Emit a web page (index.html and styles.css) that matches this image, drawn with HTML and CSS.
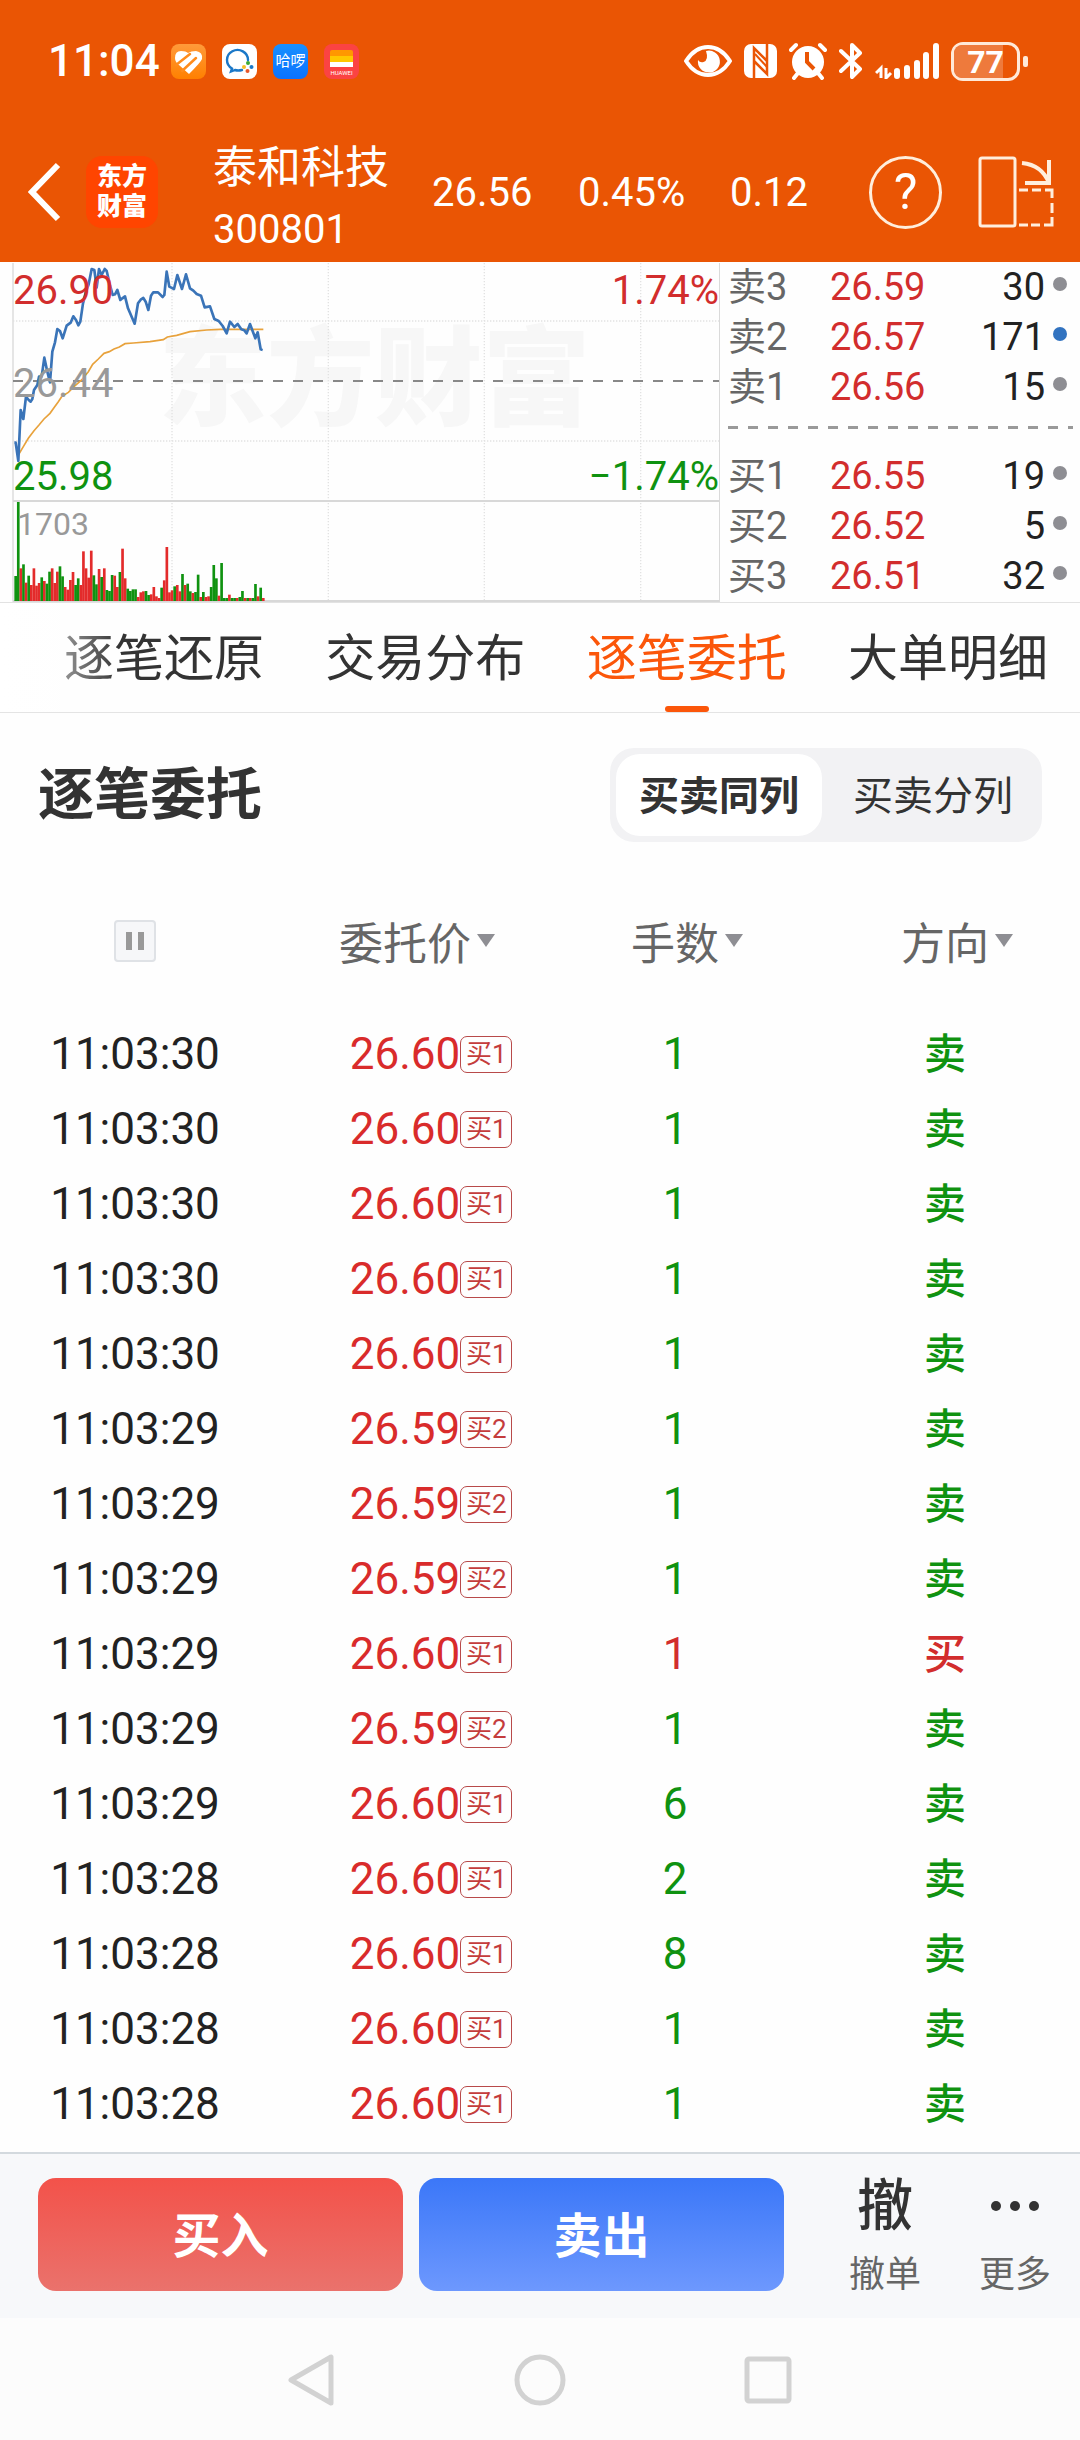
FILE: index.html
```html
<!DOCTYPE html>
<html lang="zh-CN">
<head>
<meta charset="utf-8">
<meta name="viewport" content="width=device-width, initial-scale=1">
<title>泰和科技 300801</title>
<link rel="stylesheet" href="styles.css">
</head>
<body>
<header class="top">
  <div class="status">
    <span class="clock">11:04</span>
    <div class="notices">
      <svg class="app" viewBox="0 0 35 35"><defs><linearGradient id="amber" x1="0" y1="0" x2="0" y2="1"><stop offset="0" stop-color="#ff9a3a"/><stop offset="1" stop-color="#ff8000"/></linearGradient></defs><rect width="35" height="35" rx="8" fill="url(#amber)"/><path d="M4 14Q4 7 10 7Q15 7 17 9Q20 7 25 7Q32 8 31 15Q30 18 18 30L8 21Q4 18 4 14Z" fill="#fff"/><path d="M5 21 19 10M11 27 25 14" fill="none" stroke="#ff8c1c" stroke-width="2.500" stroke-linecap="round"/></svg>
      <svg class="app" viewBox="0 0 35 35"><rect width="35" height="35" rx="8" fill="#fff"/><path d="M26 16A10.500 10 0 1 0 10 24.500L9 27.500 13 26Q16 27 20 26" fill="none" stroke="#1b78c8" stroke-width="2.400" stroke-linecap="round"/><circle cx="26" cy="19" r="2" fill="#3ba935"/><circle cx="29.500" cy="23" r="2" fill="#1b78c8"/><circle cx="25.500" cy="27" r="2" fill="#e8572a"/><circle cx="22" cy="23" r="2" fill="#f6bf26"/></svg>
      <span class="app app-hello">哈啰</span>
      <svg class="app" viewBox="0 0 35 35"><rect width="35" height="35" rx="8" fill="#fb4343"/><path d="M6 8q0-2 2-2h19q2 0 2 2v4H6z" fill="#ff9800"/><path d="M6 12h23v6H6z" fill="#ffc800"/><path d="M6 18h23v5H6z" fill="#fff"/><text class="tiny" x="17.500" y="31" text-anchor="middle">HUAWEI</text></svg>
    </div>
    <div class="signals">
      <svg width="48" height="36" viewBox="0 0 48 36"><path d="M2 18Q11 4 24 4T46 18Q37 32 24 32T2 18Z" fill="none" stroke="#fff" stroke-width="4" stroke-linejoin="round"/><path d="M22 8A11 11 0 1 1 14 17Q16 20 19.500 19Q25 17 22 8Z" fill="#fff"/></svg>
      <svg width="33" height="36" viewBox="0 0 33 36"><rect y="1" width="33" height="34" rx="7" fill="#fff"/><path d="M10 35V5L23 18M23 1V31L10 18" fill="none" stroke="#ea5504" stroke-width="2.500"/><path d="M11 11 23 24" stroke="#ea5504" stroke-width="2"/></svg>
      <svg width="38" height="38" viewBox="0 0 38 38"><circle cx="19" cy="20" r="16" fill="#fff"/><path d="M2 8 7 3M36 8 31 3M9 31 5 36M29 31 33 36" stroke="#fff" stroke-width="4" stroke-linecap="round"/><path d="M18 10V20L25 27" fill="none" stroke="#ea5504" stroke-width="4"/></svg>
      <svg width="24" height="38" viewBox="0 0 24 38"><path d="M2 9 21 27 13 35V3L21 11 2 29" fill="none" stroke="#fff" stroke-width="4" stroke-linejoin="round" stroke-linecap="round"/></svg>
      <svg width="64" height="36" viewBox="0 0 64 36"><path d="M22 28V33M32 25V33M42 20V33M51 12V33M61 3V33" stroke="#fff" stroke-width="6" stroke-linecap="round"/><path d="M6 35V25L1 30M11 25V35L16 30" fill="none" stroke="#fff" stroke-width="3"/></svg>
      <div class="battery"><span class="battery-level">77</span></div>
    </div>
  </div>
  <div class="stock">
    <button class="plain" aria-label="返回"><svg width="34" height="60" viewBox="0 0 34 60"><path d="M30 3 4 30 30 57" fill="none" stroke="#fff" stroke-width="6"/></svg></button>
    <span class="brand">东方<br>财富</span>
    <h1 class="name">泰和科技<small>300801</small></h1>
    <span>26.56</span>
    <span>0.45%</span>
    <span>0.12</span>
    <div class="tools">
      <button class="help" aria-label="帮助">?</button>
      <button class="plain" aria-label="横屏"><svg width="76" height="74" viewBox="0 0 76 74" fill="none" stroke="#ffeedc" stroke-width="3"><rect x="2" y="3" width="35" height="68" rx="2"/><path d="M44 8Q64 10 71 28M71 5V28H47" stroke-width="4"/><path d="M41 35H50M54 35H63M67 35H74V43M74 48V58M74 62V70H66M62 70H53M50 70H41"/></svg></button>
    </div>
  </div>
</header>

<section class="market">
  <div class="chart">
    <span class="watermark">东方财富</span>
    <svg class="plot" viewBox="0 21 2160 1020" preserveAspectRatio="none">
      <g fill="none" stroke="#e2e2e2" stroke-width="4" stroke-dasharray="4 5"><path d="M39 198H2157M39 558H2157M516 24V1036M985 24V1036M1453 24V1036M1922 24V1036"/></g>
      <path d="M39 24V1040" stroke="#e0e0e0" stroke-width="5"/>
      <path d="M39 738H2157M39 1038H2157" stroke="#d8d8d8" stroke-width="6"/>
      <path d="M2161 24V1044" stroke="#c8c8c8" stroke-width="6"/>
      <path d="M39 378H2157" stroke="#888" stroke-width="6" stroke-dasharray="30 30"/>
      <g id="volume"></g>
      <path fill="none" stroke="#e8a23c" stroke-width="5" d="M55 600 70 575 85 550 102 527 117 510 132 492 150 475 163 457 175 440 185 425 205 412 222 395 245 375 255 362 265 350 278 328 295 312 312 295 328 290 342 282 358 276 375 266 400 264 450 260 490 254 502 246 530 241 570 230 620 225 660 223 790 223"/>
      <path fill="none" stroke="#3a74b8" stroke-width="8" stroke-linejoin="round" d="M43 563H47L55 618 62 465 70 492 78 425 86 435 92 440 97 432 102 405 112 390 117 365 125 365 133 308 142 350 150 382 157 290 165 262 172 222 180 228 188 250 200 212 212 203 220 184 228 195 235 211 241 200 249 145 258 110 266 88 275 42 283 45 290 98 297 42 305 60 314 42 320 48 330 90 338 120 345 118 352 105 361 135 367 130 375 124 384 160 404 206 414 145 422 134 430 129 437 140 445 165 453 122 460 112 474 112 488 126 493 120 500 50 508 95 522 102 532 60 546 102 558 58 570 100 580 107 590 117 603 122 614 157 630 154 643 192 656 198 668 213 680 235 690 200 703 216 713 207 724 223 733 226 740 235 750 207 766 250 773 232 782 283 788 285"/>
    </svg>
    <div class="scale">
      <div class="scale-row up"><span>26.90</span><span>1.74%</span></div>
      <div class="scale-row mid"><span>26.44</span></div>
      <div class="scale-row down"><span>25.98</span><span>−1.74%</span></div>
      <div class="scale-volume">1703</div>
    </div>
  </div>
  <div class="book">
    <table class="depth">
      <tr><th>卖3</th><td class="red">26.59</td><td>30</td><td><i class="dot"></i></td></tr>
      <tr><th>卖2</th><td class="red">26.57</td><td>171</td><td><i class="dot dot-blue"></i></td></tr>
      <tr><th>卖1</th><td class="red">26.56</td><td>15</td><td><i class="dot"></i></td></tr>
    </table>
    <div class="spread"></div>
    <table class="depth">
      <tr><th>买1</th><td class="red">26.55</td><td>19</td><td><i class="dot"></i></td></tr>
      <tr><th>买2</th><td class="red">26.52</td><td>5</td><td><i class="dot"></i></td></tr>
      <tr><th>买3</th><td class="red">26.51</td><td>32</td><td><i class="dot"></i></td></tr>
    </table>
  </div>
</section>

<nav class="tabs">
  <a href="#restore">逐笔还原</a>
  <a href="#spread">交易分布</a>
  <a href="#orders" class="current">逐笔委托</a>
  <a href="#large">大单明细</a>
</nav>

<main id="orders">
  <div class="heading">
    <h2>逐笔委托</h2>
    <div class="switch"><button class="on">买卖同列</button><button>买卖分列</button></div>
  </div>
  <table class="orders">
    <thead>
      <tr>
        <th><button class="pause" aria-label="暂停"></button></th>
        <th><button class="sort">委托价</button></th>
        <th><button class="sort">手数</button></th>
        <th><button class="sort">方向</button></th>
      </tr>
    </thead>
    <tbody>
      <tr><td>11:03:30</td><td><span class="price">26.60<b>买1</b></span></td><td>1</td><td>卖</td></tr>
      <tr><td>11:03:30</td><td><span class="price">26.60<b>买1</b></span></td><td>1</td><td>卖</td></tr>
      <tr><td>11:03:30</td><td><span class="price">26.60<b>买1</b></span></td><td>1</td><td>卖</td></tr>
      <tr><td>11:03:30</td><td><span class="price">26.60<b>买1</b></span></td><td>1</td><td>卖</td></tr>
      <tr><td>11:03:30</td><td><span class="price">26.60<b>买1</b></span></td><td>1</td><td>卖</td></tr>
      <tr><td>11:03:29</td><td><span class="price">26.59<b>买2</b></span></td><td>1</td><td>卖</td></tr>
      <tr><td>11:03:29</td><td><span class="price">26.59<b>买2</b></span></td><td>1</td><td>卖</td></tr>
      <tr><td>11:03:29</td><td><span class="price">26.59<b>买2</b></span></td><td>1</td><td>卖</td></tr>
      <tr class="buy"><td>11:03:29</td><td><span class="price">26.60<b>买1</b></span></td><td>1</td><td>买</td></tr>
      <tr><td>11:03:29</td><td><span class="price">26.59<b>买2</b></span></td><td>1</td><td>卖</td></tr>
      <tr><td>11:03:29</td><td><span class="price">26.60<b>买1</b></span></td><td>6</td><td>卖</td></tr>
      <tr><td>11:03:28</td><td><span class="price">26.60<b>买1</b></span></td><td>2</td><td>卖</td></tr>
      <tr><td>11:03:28</td><td><span class="price">26.60<b>买1</b></span></td><td>8</td><td>卖</td></tr>
      <tr><td>11:03:28</td><td><span class="price">26.60<b>买1</b></span></td><td>1</td><td>卖</td></tr>
      <tr><td>11:03:28</td><td><span class="price">26.60<b>买1</b></span></td><td>1</td><td>卖</td></tr>
    </tbody>
  </table>
</main>

<footer>
  <div class="trade">
    <button class="deal deal-buy">买入</button>
    <button class="deal deal-sell">卖出</button>
    <div class="more">
      <button class="action"><span class="action-icon">撤</span>撤单</button>
      <button class="action"><span class="action-icon"><svg width="48" height="12" viewBox="0 0 48 12" fill="#333"><circle cx="5" cy="6" r="5"/><circle cx="24" cy="6" r="5"/><circle cx="43" cy="6" r="5"/></svg></span>更多</button>
    </div>
  </div>
  <div class="system">
    <button class="plain" aria-label="返回"><svg width="52" height="54" viewBox="0 0 52 54"><path d="M45 4V50L5 27Z"/></svg></button>
    <button class="plain" aria-label="主屏幕"><svg width="52" height="54" viewBox="0 0 52 54"><circle cx="26" cy="27" r="23"/></svg></button>
    <button class="plain" aria-label="最近任务"><svg width="52" height="54" viewBox="0 0 52 54"><rect x="5" y="6" width="42" height="42" rx="2"/></svg></button>
  </div>
</footer>
<script src="chart.js"></script>
</body>
</html>
```
FILE: styles.css
```css
* { box-sizing: border-box; }
body {
  margin: 0;
  background: #fefefe;
  color: #222;
  font-family: Roboto, "Noto Sans CJK SC", sans-serif;
}
button {
  padding: 0;
  border: 0;
  background: none;
  color: inherit;
  font: inherit;
}
svg { display: block; }
table { border-collapse: collapse; }
th, td { padding: 0; font-weight: 400; }
.red { color: #d22d2d; }

/* orange header */
.top { background: #ea5504; color: #fff; }
.status {
  display: flex;
  align-items: center;
  height: 122px;
  padding: 0 52px 0 48px;
}
.clock { width: 123px; font-size: 44px; font-weight: 500; }
.notices { display: flex; gap: 16px; }
.app { width: 35px; height: 35px; }
.app-hello {
  border-radius: 8px;
  background: linear-gradient(#1890ff, #0a72ff);
  font-size: 15px;
  line-height: 34px;
  text-align: center;
  white-space: nowrap;
}
.tiny { fill: #fff; font-size: 6px; }
.signals {
  display: flex;
  align-items: center;
  gap: 12px;
  margin-left: auto;
}
.battery {
  position: relative;
  width: 69px;
  height: 39px;
  margin-right: 8px;
  padding: 2px;
  border: 3px solid #ffe9d8;
  border-radius: 12px;
}
.battery::after {
  content: "";
  position: absolute;
  right: -11px;
  top: 11px;
  width: 5px;
  height: 11px;
  border-radius: 2px;
  background: #ffe9d8;
}
.battery::before {
  content: "";
  position: absolute;
  inset: 0 14px 0 0;
  border-radius: 8px 0 0 8px;
  background: #ee7a3c;
}
.battery-level {
  position: relative;
  display: block;
  font-size: 32px;
  font-weight: 700;
  line-height: 31px;
  text-align: center;
}
.stock {
  display: grid;
  grid-template-columns: 58fr 127fr 219fr 146fr 152fr 100fr 224fr;
  align-items: center;
  height: 140px;
  padding: 0 26px 0 28px;
  font-size: 40px;
}
.brand {
  width: 72px;
  padding: 6px 0;
  border-radius: 16px;
  background: #ff4500;
  font-size: 25px;
  font-weight: 900;
  line-height: 30px;
  text-align: center;
}
.name {
  margin: 14px 0 0;
  font-size: 44px;
  font-weight: 400;
  line-height: 62px;
  white-space: nowrap;
}
.name small { display: block; font-size: 40px; }
.tools {
  display: flex;
  align-items: center;
  justify-content: flex-end;
  gap: 36px;
}
.help {
  width: 73px;
  height: 73px;
  border: 3px solid #ffeedc;
  border-radius: 50%;
  font-size: 50px;
  line-height: 66px;
}

/* chart and order book */
.market {
  display: grid;
  grid-template-columns: 2fr 1fr;
  border-bottom: 1px solid #e2e2e2;
}
.chart { position: relative; height: 340px; }
.plot { position: absolute; inset: 0; width: 100%; height: 100%; }
.watermark {
  position: absolute;
  left: 22%;
  top: 60px;
  color: #f7f7f7;
  font-size: 108px;
  font-weight: 900;
  line-height: 116px;
}
.scale { position: relative; font-size: 40px; }
.scale-row {
  display: flex;
  justify-content: space-between;
  height: 93px;
  padding: 6px 1px 0 13px;
  line-height: 46px;
}
.up { color: #d22d2d; }
.mid { color: #999; }
.down { height: 96px; color: #0f9210; }
.scale-volume {
  padding-left: 17px;
  color: #999;
  font-size: 32px;
  line-height: 36px;
  margin-top: -38px;
}
.book { padding: 0 7px 0 8px; font-size: 38px; }
.depth { width: 100%; table-layout: fixed; }
.depth tr { height: 50px; line-height: 48px; }
.depth th { width: 102px; color: #666; text-align: left; }
.depth td:nth-child(3) { text-align: right; }
.depth td:nth-child(2) { width: 110px; }
.depth td:nth-child(4) { width: 28px; }
.dot {
  display: block;
  width: 14px;
  height: 14px;
  margin: -6px 0 0 8px;
  border-radius: 50%;
  background: #8e8e93;
}
.dot-blue { background: #3273c0; }
.spread {
  height: 3px;
  margin: 14px 0 22px;
  background: repeating-linear-gradient(90deg, #999 0 10px, transparent 10px 20px);
}

/* tabs */
.tabs {
  position: relative;
  display: flex;
  justify-content: space-between;
  padding: 0 32px 0 64px;
  border-bottom: 1px solid #e4e4e4;
  font-size: 50px;
}
.tabs::before {
  content: "";
  position: absolute;
  inset: 0 auto 0 0;
  width: 120px;
  background: linear-gradient(90deg, #fff, rgba(255, 255, 255, 0));
}
.tabs a {
  padding-top: 4px;
  color: #333;
  line-height: 105px;
  text-decoration: none;
}
.tabs .current { position: relative; color: #fb560a; }
.current::after {
  content: "";
  position: absolute;
  left: calc(50% - 22px);
  bottom: 0;
  width: 44px;
  height: 6px;
  border-radius: 3px;
  background: #fb560a;
}

/* order list */
.heading {
  display: flex;
  align-items: center;
  justify-content: space-between;
  padding: 35px 38px 27px;
}
.heading h2 { margin: 0; color: #333; font-size: 56px; line-height: 80px; }
.switch {
  display: flex;
  gap: 8px;
  padding: 6px;
  border-radius: 24px;
  background: #f2f2f4;
  color: #333;
  font-size: 40px;
}
.switch button {
  width: 206px;
  height: 82px;
  padding-bottom: 4px;
  border-radius: 24px;
}
.switch .on { background: #fff; font-weight: 700; }
.orders {
  width: 100%;
  margin-bottom: 10px;
  table-layout: fixed;
  font-size: 44px;
  text-align: center;
}
.orders thead tr { height: 148px; color: #666; }
.orders tbody tr { height: 75px; }
.orders tbody td { line-height: 75px; }
.orders td:nth-child(n+3) { color: #0f9210; }
.orders .buy td:nth-child(n+3) { color: #d22d2d; }
.orders td:last-child { font-size: 42px; font-weight: 500; }
.orders th { padding-bottom: 4px; }
.pause {
  display: block;
  width: 42px;
  height: 42px;
  margin: 0 auto;
  padding: 0 10px;
  border: 2px solid #dfe2e6;
  border-radius: 4px;
  background: #f6f7f9;
}
.pause::before {
  content: "";
  display: block;
  width: 6px;
  height: 18px;
  border: solid #999;
  border-width: 0 6px;
}
.sort, .price { position: relative; }
.sort::after {
  content: "";
  position: absolute;
  left: calc(100% + 6px);
  top: 50%;
  margin-top: -7px;
  border: solid transparent;
  border-width: 13px 9px 0;
  border-top-color: #8e8e93;
}
.price { color: #d92b2b; }
.price b {
  position: absolute;
  left: 100%;
  top: 8px;
  width: 52px;
  height: 37px;
  border: 1px solid #b84a4a;
  border-radius: 7px;
  color: #c43c3c;
  font-size: 26px;
  font-weight: 400;
  line-height: 34px;
}

/* bottom bars */
.trade {
  display: flex;
  gap: 16px;
  padding: 24px 0 25px 38px;
  border-top: 2px solid #d3d9de;
  background: #f7f8fa;
}
.deal {
  flex: 1;
  height: 113px;
  padding-bottom: 6px;
  border-radius: 18px;
  color: #fff;
  font-size: 48px;
  font-weight: 700;
}
.deal-buy { background: linear-gradient(#f3524a, #ea726c); }
.deal-sell { background: linear-gradient(#3b77f8, #6d98fe); }
.more { display: flex; margin-left: 20px; }
.action {
  width: 130px;
  color: #666;
  font-size: 36px;
  line-height: 36px;
}
.action-icon {
  display: flex;
  align-items: center;
  justify-content: center;
  height: 56px;
  margin-bottom: 23px;
  color: #333;
  font-size: 56px;
  font-weight: 500;
}
.system {
  display: flex;
  justify-content: center;
  gap: 176px;
  padding: 35px 0;
  background: #fcfcfc;
}
.system svg {
  fill: none;
  stroke: #d2d2d2;
  stroke-width: 5px;
  stroke-linejoin: round;
}
```
FILE: chart.js
```js
// One entry per minute: r = rising, g = falling, then the height of the bar.
const minutes = ("g75 g297 r98 g110 r55 g76 r48 r98 r46 r54 g71 r60 g52 g88 r98 r54 r88 g104 g74 r42 r34 r63 r87 g48 " +
  "g68 r48 r149 r98 r70 r151 g77 g50 r96 g72 r98 g33 g30 g78 r76 r42 g87 r157 r68 g37 g30 g35 g35 r12 " +
  "r26 r29 g30 g18 r20 r42 r14 r9 g40 r62 r162 r26 r32 g44 r48 r29 g81 r48 g52 g29 r24 g27 g79 r12 " +
  "g27 r12 r14 g42 g108 g68 r16 g114 g9 g9 r19 g9 g9 r9 g12 g30 r9 g9 r9 g9 g51 r14 g40 r9").split(" ");
document.getElementById("volume").innerHTML = minutes.map((m, i) =>
  `<rect x="${43 + i * 7.82}" y="${1038 - m.slice(1)}" width="8" height="${m.slice(1)}" fill="${m[0] === "r" ? "#e32b2b" : "#0f9210"}"/>`).join("");
```
